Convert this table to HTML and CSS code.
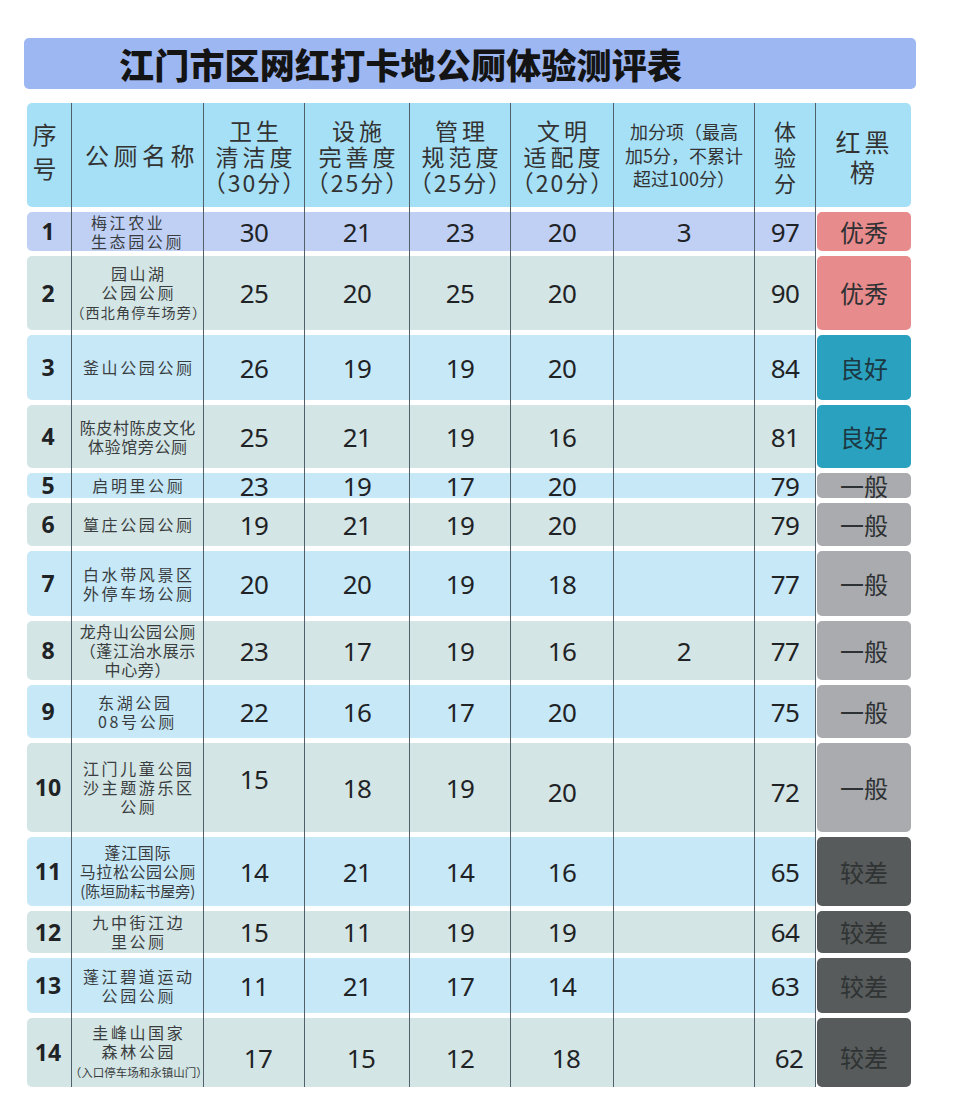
FILE: index.html
```html
<!DOCTYPE html>
<html lang="zh-CN">
<head>
<meta charset="utf-8">
<title>江门市区网红打卡地公厕体验测评表</title>
<link rel="stylesheet" href="styles.css">
</head>
<body>
<div class="page">
  <h1 class="title">江门市区网红打卡地公厕体验测评表</h1>
  <div class="table">
    <div class="row head">
      <div class="c h-no"><div>序<br>号</div></div>
      <div class="c h-name"><div>公厕名称</div></div>
      <div class="c h-sc"><div>卫生<br>清洁度<br><span class="pa">（30分）</span></div></div>
      <div class="c h-sc"><div>设施<br>完善度<br><span class="pa">（25分）</span></div></div>
      <div class="c h-sc"><div>管理<br>规范度<br><span class="pa">（25分）</span></div></div>
      <div class="c h-sc"><div>文明<br>适配度<br><span class="pa">（20分）</span></div></div>
      <div class="c h-bonus"><div>加分项（最高<br>加5分，不累计<br>超过100分）</div></div>
      <div class="c h-total"><div>体<br>验<br>分</div></div>
      <div class="c h-rank"><div>红黑<br>榜</div></div>
    </div>

    <div class="row lav">
      <div class="c no">1</div>
      <div class="c nm left"><div>梅江农业<br>生态园公厕</div></div>
      <div class="c n">30</div><div class="c n">21</div><div class="c n">23</div><div class="c n">20</div>
      <div class="c n">3</div><div class="c n">97</div>
      <div class="c bc"><div class="badge red">优秀</div></div>
    </div>

    <div class="row even">
      <div class="c no">2</div>
      <div class="c nm"><div>园山湖<br>公园公厕<br><span class="sm">（西北角停车场旁）</span></div></div>
      <div class="c n">25</div><div class="c n">20</div><div class="c n">25</div><div class="c n">20</div>
      <div class="c n"></div><div class="c n">90</div>
      <div class="c bc"><div class="badge red">优秀</div></div>
    </div>

    <div class="row odd">
      <div class="c no">3</div>
      <div class="c nm"><div>釜山公园公厕</div></div>
      <div class="c n">26</div><div class="c n">19</div><div class="c n">19</div><div class="c n">20</div>
      <div class="c n"></div><div class="c n">84</div>
      <div class="c bc"><div class="badge teal">良好</div></div>
    </div>

    <div class="row even">
      <div class="c no">4</div>
      <div class="c nm tight"><div>陈皮村陈皮文化<br>体验馆旁公厕</div></div>
      <div class="c n">25</div><div class="c n">21</div><div class="c n">19</div><div class="c n">16</div>
      <div class="c n"></div><div class="c n">81</div>
      <div class="c bc"><div class="badge teal">良好</div></div>
    </div>

    <div class="row odd">
      <div class="c no">5</div>
      <div class="c nm"><div>启明里公厕</div></div>
      <div class="c n">23</div><div class="c n">19</div><div class="c n">17</div><div class="c n">20</div>
      <div class="c n"></div><div class="c n">79</div>
      <div class="c bc"><div class="badge gray small">一般</div></div>
    </div>

    <div class="row even">
      <div class="c no">6</div>
      <div class="c nm"><div>篁庄公园公厕</div></div>
      <div class="c n">19</div><div class="c n">21</div><div class="c n">19</div><div class="c n">20</div>
      <div class="c n"></div><div class="c n">79</div>
      <div class="c bc"><div class="badge gray">一般</div></div>
    </div>

    <div class="row odd">
      <div class="c no">7</div>
      <div class="c nm"><div>白水带风景区<br>外停车场公厕</div></div>
      <div class="c n">20</div><div class="c n">20</div><div class="c n">19</div><div class="c n">18</div>
      <div class="c n"></div><div class="c n">77</div>
      <div class="c bc"><div class="badge gray">一般</div></div>
    </div>

    <div class="row even">
      <div class="c no">8</div>
      <div class="c nm tight"><div>龙舟山公园公厕<br>（蓬江治水展示<br>中心旁）</div></div>
      <div class="c n">23</div><div class="c n">17</div><div class="c n">19</div><div class="c n">16</div>
      <div class="c n">2</div><div class="c n">77</div>
      <div class="c bc"><div class="badge gray">一般</div></div>
    </div>

    <div class="row odd">
      <div class="c no">9</div>
      <div class="c nm left"><div>东湖公园<br>08号公厕</div></div>
      <div class="c n">22</div><div class="c n">16</div><div class="c n">17</div><div class="c n">20</div>
      <div class="c n"></div><div class="c n">75</div>
      <div class="c bc"><div class="badge gray">一般</div></div>
    </div>

    <div class="row even">
      <div class="c no">10</div>
      <div class="c nm"><div>江门儿童公园<br>沙主题游乐区<br>公厕</div></div>
      <div class="c n up">15</div><div class="c n">18</div><div class="c n">19</div><div class="c n dn">20</div>
      <div class="c n"></div><div class="c n dn">72</div>
      <div class="c bc"><div class="badge gray">一般</div></div>
    </div>

    <div class="row odd">
      <div class="c no">11</div>
      <div class="c nm tight"><div>蓬江国际<br>马拉松公园公厕<br><span class="md">(陈垣励耘书屋旁)</span></div></div>
      <div class="c n">14</div><div class="c n">21</div><div class="c n">14</div><div class="c n">16</div>
      <div class="c n"></div><div class="c n">65</div>
      <div class="c bc"><div class="badge dark">较差</div></div>
    </div>

    <div class="row even">
      <div class="c no">12</div>
      <div class="c nm"><div>九中街江边<br>里公厕</div></div>
      <div class="c n">15</div><div class="c n">11</div><div class="c n">19</div><div class="c n">19</div>
      <div class="c n"></div><div class="c n">64</div>
      <div class="c bc"><div class="badge dark">较差</div></div>
    </div>

    <div class="row odd">
      <div class="c no">13</div>
      <div class="c nm"><div>蓬江碧道运动<br>公园公厕</div></div>
      <div class="c n">11</div><div class="c n">21</div><div class="c n">17</div><div class="c n">14</div>
      <div class="c n"></div><div class="c n">63</div>
      <div class="c bc"><div class="badge dark">较差</div></div>
    </div>

    <div class="row even low">
      <div class="c no">14</div>
      <div class="c nm"><div>圭峰山国家<br>森林公园<br><span class="xs">（入口停车场和永镇山门）</span></div></div>
      <div class="c n sh">17</div><div class="c n sh">15</div><div class="c n">12</div><div class="c n sh">18</div>
      <div class="c n"></div><div class="c n sh">62</div>
      <div class="c bc"><div class="badge dark">较差</div></div>
    </div>
  </div>
</div>
</body>
</html>
```

FILE: styles.css
```css
html, body {
  margin: 0;
  padding: 0;
  background: #ffffff;
}

body {
  font-family: "Noto Sans CJK SC", "Noto Sans", sans-serif;
  color: #333;
}

.page {
  padding: 38px 0 0 24px;
}

.title {
  box-sizing: border-box;
  width: 892px;
  height: 51px;
  margin: 0;
  padding-left: 95px;
  background: #9db7f3;
  border-radius: 5px;
  font-family: "Noto Sans CJK SC", sans-serif;
  font-weight: 900;
  font-size: 35px;
  line-height: 52px;
  color: #141414;
  letter-spacing: 0.2px;
  white-space: nowrap;
}

.table {
  margin: 14px 0 0 3px;
  width: 884px;
  display: grid;
  grid-template-rows: 104px 39px 74px 65px 63px 25px 43px 65px 59px 53px 89px 69px 42px 55px 69px;
  row-gap: 5px;
  background-image:
    linear-gradient(#52606a, #52606a),
    linear-gradient(#52606a, #52606a),
    linear-gradient(#52606a, #52606a),
    linear-gradient(#52606a, #52606a),
    linear-gradient(#52606a, #52606a),
    linear-gradient(#52606a, #52606a),
    linear-gradient(#52606a, #52606a),
    linear-gradient(#52606a, #52606a);
  background-size: 1px 100%;
  background-repeat: no-repeat;
  background-position: 44px 0, 176px 0, 277px 0, 382px 0, 483px 0, 586px 0, 727px 0, 788px 0;
}

.row {
  display: grid;
  grid-template-columns: 44px 132px 101px 105px 101px 103px 141px 61px 96px;
  border-radius: 5px;
  min-height: 0;
}

.c {
  border-left: 1px solid #52606a;
  display: flex;
  align-items: center;
  justify-content: center;
  text-align: center;
  min-width: 0;
  min-height: 0;
}

.c:first-child {
  border-left: 0;
}

/* header */
.head {
  background: #a6e0f6;
  color: #333;
}

.h-no {
  font-size: 24px;
  line-height: 34px;
  padding: 0 9px 8px 0;
}

.h-name {
  font-size: 24px;
  letter-spacing: 4.5px;
  padding-left: 9px;
  line-height: 30px;
}

.h-sc {
  font-size: 23px;
  line-height: 26px;
  letter-spacing: 4px;
  padding-left: 4px;
  padding-top: 2px;
  white-space: nowrap;
}

.h-sc .pa {
  letter-spacing: 2px;
  margin-left: -2px;
}

.h-bonus {
  font-size: 18px;
  line-height: 23.5px;
  letter-spacing: 0;
  padding-top: 1px;
  white-space: nowrap;
}

.h-total {
  font-size: 22px;
  line-height: 26px;
  padding-top: 2px;
}

.h-rank {
  font-size: 25px;
  line-height: 30px;
  letter-spacing: 4px;
  padding-left: 2px;
  padding-top: 2px;
}

/* body rows */
.lav  { background: #c0d0f5; }
.even { background: #d3e5e4; }
.odd  { background: #c6e8f7; }

.no {
  font: 700 23px/1 "Noto Sans", sans-serif;
  color: #1f2326;
  padding-right: 2px;
}

.nm {
  font-size: 16px;
  line-height: 19px;
  letter-spacing: 2.6px;
  padding-left: 2.6px;
  color: #3a3d3f;
  white-space: nowrap;
}

.nm.left {
  text-align: left;
  padding-left: 0;
}

.nm.tight {
  letter-spacing: 0.6px;
  padding-left: 0.6px;
}

.nm .sm {
  font-size: 14px;
  letter-spacing: 1.2px;
}

.nm .md {
  font-size: 15px;
  letter-spacing: 0;
}

.nm .xs {
  font-size: 11.5px;
  letter-spacing: 0;
}

.n {
  font: 400 26px/1 "Noto Sans", sans-serif;
  color: #1f2326;
  letter-spacing: -0.5px;
}

.n.up {
  padding-bottom: 18px;
}

.n.dn {
  padding-top: 8px;
}

.low .n {
  padding-top: 10px;
}

.low .n.sh {
  padding-left: 8px;
}

/* badges */
.bc {
  background: #ffffff;
  padding-left: 1px;
  align-items: stretch;
  justify-content: stretch;
}

.badge {
  flex: 1;
  border-radius: 5px;
  display: flex;
  align-items: center;
  justify-content: center;
  font-size: 24px;
  line-height: 1;
  color: #2e3133;
}

.badge.small {
  line-height: 22px;
}

.red  { background: #e88b8c; }
.teal { background: #2aa2bf; color: #1c3842; }
.gray { background: #a9abae; }
.dark { background: #575b5b; color: #303333; }

.low .badge {
  padding-top: 8px;
}
```
